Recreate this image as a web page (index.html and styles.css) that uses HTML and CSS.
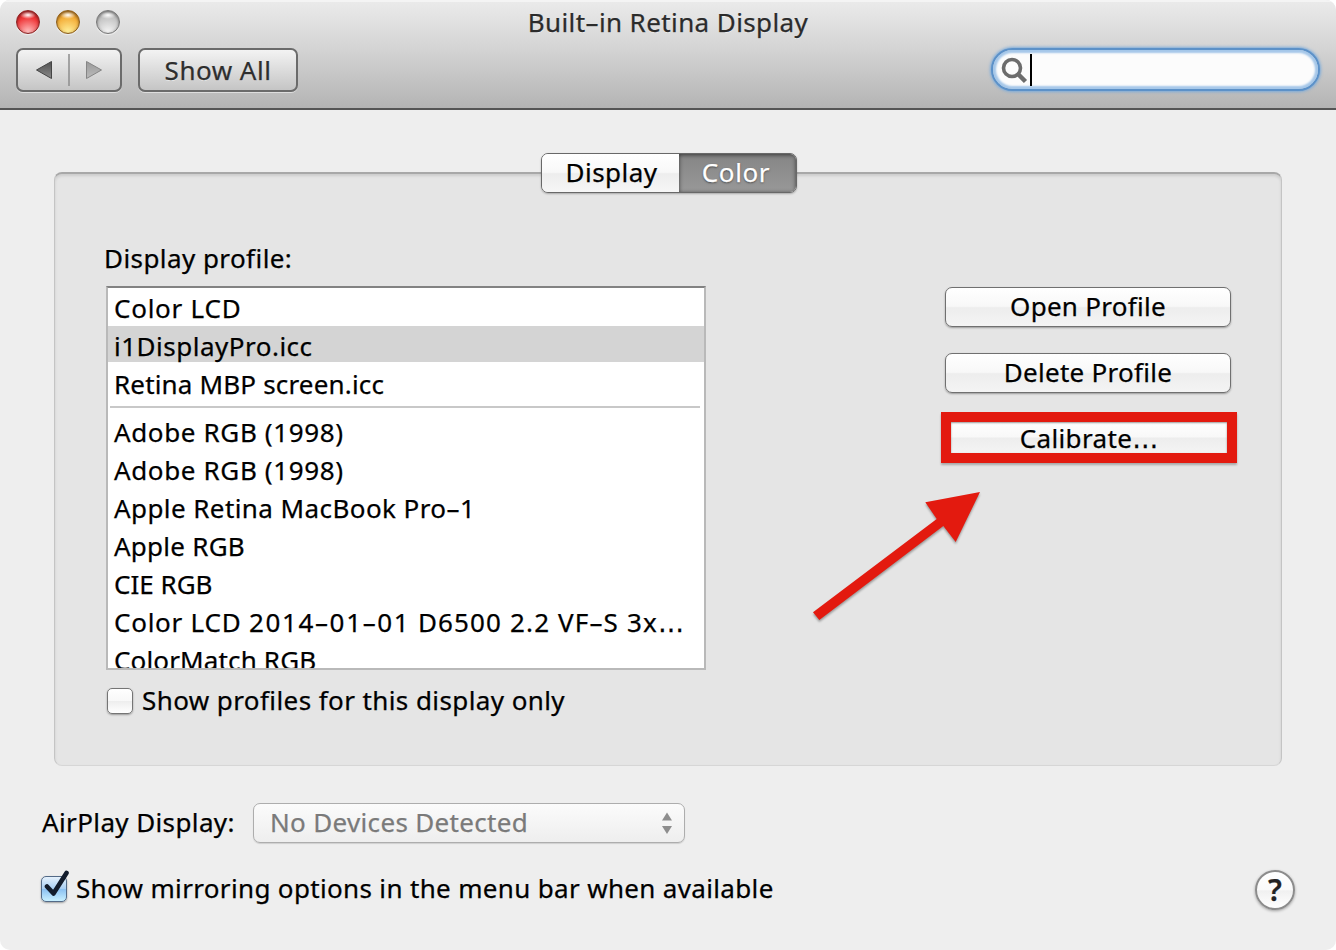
FILE: index.html
```html
<!DOCTYPE html>
<html lang="en">
<head>
<meta charset="utf-8">
<title>Built-in Retina Display</title>
<link rel="stylesheet" href="styles.css">
</head>
<body>
<div class="window">
  <header class="toolbar">
    <div class="titlebar">
      <div class="lights"><i class="light red"></i><i class="light amber"></i><i class="light gray"></i></div>
      <h1 class="title">Built–in Retina Display</h1>
    </div>
    <div class="tools">
      <div class="nav">
        <svg width="102" height="40" viewBox="0 0 102 40">
          <defs>
            <linearGradient id="dark" x2="0" y2="1"><stop offset="0" stop-color="#505050"/><stop offset="1" stop-color="#8a8a8a"/></linearGradient>
            <linearGradient id="pale" x2="0" y2="1"><stop offset="0" stop-color="#999"/><stop offset="1" stop-color="#bbb"/></linearGradient>
          </defs>
          <path d="M18.500 20L33.500 11.500V28.500Z" fill="url(#dark)" stroke="#444"/>
          <path d="M51 4V36" stroke="#8c8c8c" stroke-width="1.500"/>
          <path d="M83.500 20L68.500 11.500V28.500Z" fill="url(#pale)" stroke="#858585"/>
        </svg>
      </div>
      <button class="showall"><span class="t-showall">Show All</span></button>
      <div class="search">
        <svg width="28" height="28" viewBox="0 0 28 28"><circle cx="11" cy="11" r="8.500" fill="none" stroke="#6c6c6c" stroke-width="3.600"/><path d="M17 17L24.500 24.500" stroke="#6c6c6c" stroke-width="4.500"/></svg>
        <i class="caret"></i>
      </div>
    </div>
  </header>
  <main>
    <section class="panel">
      <nav class="tabs"><span class="tab"><span class="t-display">Display</span></span><span class="tab active"><span class="t-color">Color</span></span></nav>
      <div class="columns">
        <div class="profiles">
          <p class="label">Display profile:</p>
          <ul class="list">
            <li class="r1">Color LCD</li>
            <li class="selected r2">i1DisplayPro.icc</li>
            <li class="r3">Retina MBP screen.icc</li>
            <li class="rule"></li>
            <li class="r4">Adobe RGB (1998)</li>
            <li class="r4">Adobe RGB (1998)</li>
            <li class="r5">Apple Retina MacBook Pro–1</li>
            <li class="r6">Apple RGB</li>
            <li class="r7">CIE RGB</li>
            <li class="r1">Color LCD <span class="date">2014–01–01</span> <span class="r8">D6500 2.2 VF–S 3x<span class="dots">…</span></span></li>
            <li class="r9">ColorMatch RGB</li>
          </ul>
          <label class="check"><i class="box"></i><span class="t-only">Show profiles for this display only</span></label>
        </div>
        <div class="actions">
          <button class="push"><span class="t-open">Open Profile</span></button>
          <button class="push"><span class="t-open">Delete Profile</span></button>
          <button class="push marked"><span class="t-cal">Calibrate<b class="dots">…</b></span></button>
        </div>
      </div>
      <svg class="arrow" width="180" height="145" viewBox="0 0 180 145"><path d="M2 123.300L125.700 30L114.300 13.300L169 3L144.700 53L132.300 37L8.300 131Z" fill="#e31a0f"/></svg>
    </section>
    <footer>
      <div class="airplay">
        <span class="t-air">AirPlay Display:</span>
        <div class="popup"><span class="t-none">No Devices Detected</span><svg width="12" height="24" viewBox="0 0 12 24"><path d="M1 9.500L6 1.500L11 9.500ZM1 15L6 23L11 15Z" fill="#8d8d8d"/></svg></div>
      </div>
      <div class="bottom">
        <label class="check"><i class="box on"><svg width="34" height="34" viewBox="0 0 34 34"><path d="M9 16.500L15.500 23.500L28.500 3" fill="none" stroke="#131c2c" stroke-width="4.600" stroke-linecap="round" stroke-linejoin="round"/></svg></i><span class="t-mirror">Show mirroring options in the menu bar when available</span></label>
        <button class="help">?</button>
      </div>
    </footer>
  </main>
</div>
</body>
</html>
```
FILE: styles.css
```css
* { box-sizing: border-box; }
body, h1, p, ul { margin: 0; padding: 0; }
body { width: 1336px; height: 950px; overflow: hidden; background: #fff; font: 26px/38px "Noto Sans", sans-serif; color: #000; -webkit-text-stroke: .25px; }
button { font: inherit; color: inherit; padding: 0; }
span { white-space: nowrap; }
svg { display: block; }
.window { height: 950px; background: #eee; border-radius: 10px; overflow: hidden; }
.toolbar { height: 110px; background: linear-gradient(#ebebeb, #d4d4d4 45%, #b4b4b4); border-bottom: 2px solid #555; box-shadow: inset 0 2px #f4f4f4; }
.titlebar { height: 48px; display: grid; grid-template-columns: 1fr auto 1fr; align-items: start; }
.lights { display: flex; gap: 16px; padding: 10px 0 0 16px; }
.light { width: 24px; height: 24px; border-radius: 50%; border: 1px solid; box-shadow: 0 1px 1px #fff9, inset 0 1px 3px #0007; }
.red { border-color: #8c2323; background: radial-gradient(ellipse 8px 4px at 50% 18%, #fff, #fff0), radial-gradient(circle at 50% 95%, #ffc0c0, #f0393b 60%, #c81e20); }
.amber { border-color: #8c5c1a; background: radial-gradient(ellipse 8px 4px at 50% 18%, #fff, #fff0), radial-gradient(circle at 50% 95%, #fff09a, #f4b03c 60%, #c87812); }
.gray { border-color: #777; background: radial-gradient(ellipse 8px 4px at 50% 18%, #fff, #fff0), radial-gradient(circle at 50% 95%, #f4f4f4, #c6c6c6 60%, #b0b0b0); }
.title { font-size: 26px; font-weight: 400; line-height: 38px; padding-top: 3px; color: #2b2b2b; text-shadow: 0 1px #fff8; white-space: nowrap; letter-spacing: .4px; }
.tools { display: flex; padding: 0 15px 0 16px; }
.nav, .showall { height: 44px; border: 2px solid #6b6b6b; border-radius: 7px; background: linear-gradient(#f3f3f3, #c5c5c5); box-shadow: 0 1px #ffffff80; }
.nav { width: 106px; }
.showall { width: 160px; margin-left: 16px; color: #2e2e2e; text-shadow: 0 1px #fff8; }
.t-showall { letter-spacing: .5px; }
.search { width: 329px; height: 43px; margin: 0 1px 0 auto; border: 2px solid #5c91c8; border-radius: 22px; background: #fcfcfc; box-shadow: 0 0 3px 1px #79aadb, inset 0 0 2px 3px #a5c7e9; display: flex; padding: 5px 0 0 8px; gap: 1px; }
.search svg { margin-top: 2px; }
.caret { width: 2px; height: 32px; background: #000; margin-top: -1px; }
main { height: 840px; padding: 62px 54px 0; }
.panel { position: relative; height: 594px; background: #e5e5e5; border: 1px solid #c4c4c4; border-top: 2px solid #a8a8a8; border-bottom-color: #d6d6d6; border-radius: 8px; box-shadow: inset 0 2px 3px #0000001c; }
.tabs { width: 256px; height: 40px; margin: -21px 0 1px 486px; display: flex; border: 1px solid #686868; border-radius: 7px; overflow: hidden; box-shadow: 0 1px 2px #0004; position: relative; }
.tab { width: 137px; padding-left: 2px; text-align: center; line-height: 36px; background: linear-gradient(#fff, #f8f8f8 48%, #ededed 52%, #f6f6f6); }
.tab.active { flex: 1; padding: 0 3px 0 0; color: #fff; background: linear-gradient(#858585, #989898); box-shadow: inset 0 1px 4px #0009; text-shadow: 0 1px 2px #0008; }
.t-display { letter-spacing: .45px; }
.t-color { letter-spacing: .6px; }
.columns { display: flex; justify-content: space-between; padding: 45px 50px 0 51px; }
.profiles { width: 600px; }
.label { height: 47px; margin-left: -2px; line-height: 38px; white-space: nowrap; letter-spacing: .43px; }
.list { height: 384px; list-style: none; background: #fff; border: 2px solid #b9b9b9; border-top-color: #828282; overflow: hidden; }
.list li { height: 38px; line-height: 40px; padding-left: 6px; white-space: nowrap; }
.list .selected { background: linear-gradient(#d4d4d4, #d4d4d4) no-repeat 0 0 / 100% 36px; }
.list .rule { height: 2px; margin: 4px 4px 4px 2px; background: #c8c8c8; }
.r1 { letter-spacing: .75px; }
.r2 { letter-spacing: .5px; }
.r3 { letter-spacing: .17px; }
.r4 { letter-spacing: .63px; }
.r5 { letter-spacing: .42px; }
.r6 { letter-spacing: .25px; }
.date { letter-spacing: 1.65px; }
.r8 { letter-spacing: 1.15px; }
.r9 { letter-spacing: .15px; }
.dots { font-family: "DejaVu Sans", sans-serif; font-weight: 400; line-height: 1; letter-spacing: 0; }
.check { display: flex; align-items: center; }
.profiles .check { margin-top: 13px; gap: 9px; }
.t-only { letter-spacing: .41px; margin-top: -2px; }
.box { width: 26px; height: 26px; margin-left: 1px; flex: none; border: 1px solid #757575; border-radius: 5px; background: linear-gradient(#fff, #f8f8f8 50%, #eee 52%, #fff); box-shadow: 0 1px 2px #0005; }
.actions { width: 286px; padding-top: 48px; display: flex; flex-direction: column; gap: 26px; }
.push { height: 40px; flex: none; border: 1px solid #707070; border-radius: 7px; background: linear-gradient(#fff, #f8f8f8 48%, #ededed 52%, #f4f4f4); box-shadow: 0 1px 2px #0005; line-height: 36px; }
.push > span { display: block; margin-top: -2px; }
.t-open { letter-spacing: .28px; }
.t-cal { letter-spacing: .35px; }
.marked { width: 296px; height: 51px; margin: -7px 0 0 -4px; border: 10px solid #e31a0f; border-radius: 0; line-height: 32px; box-shadow: 0 2px 2px #0004, inset 0 1px 2px #0006; }
.marked .t-cal { margin-top: 0; }
.arrow { position: absolute; left: 756px; top: 315px; filter: drop-shadow(0 2px 1px #0005); overflow: visible; }
footer { margin: 37px -13px 0; }
.airplay { display: flex; align-items: center; }
.t-air { width: 212px; padding-left: 1px; margin-top: -2px; letter-spacing: .38px; }
.popup { width: 432px; height: 40px; border: 1px solid #adadad; border-radius: 7px; background: linear-gradient(#fbfbfb, #eee); box-shadow: 0 1px 1px #0002; color: #7a7a7a; display: flex; align-items: center; justify-content: space-between; padding: 0 11px 2px 16px; }
.popup svg { margin-top: 2px; }
.t-none { letter-spacing: .33px; }
.bottom { display: flex; align-items: center; justify-content: space-between; margin-top: 27px; }
.bottom .check { gap: 9px; margin-top: -2px; }
.bottom .box { margin-left: 0; }
.t-mirror { letter-spacing: .34px; margin-top: -2px; }
.box.on { border-color: #536a87; background: linear-gradient(#e5f1fc, #a9cff3 48%, #8cc1f1 52%, #c9f0ff); }
.on svg { margin: -7px 0 0 -4px; }
.help { width: 40px; height: 40px; border: 2px solid #8c8c8c; border-radius: 50%; background: linear-gradient(#fff, #fafafa 50%, #f0f0f0 52%, #fff); box-shadow: 0 1px 3px #0005; font-weight: 600; font-size: 30px; line-height: 36px; color: #222; }
```
